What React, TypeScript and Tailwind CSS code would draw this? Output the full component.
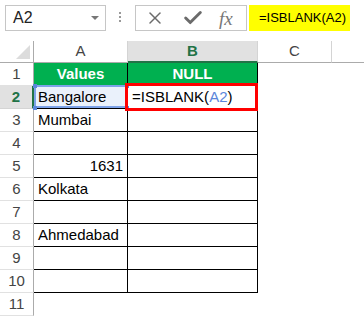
import {X, Check} from 'lucide-react';

const rows: {n: number; a: string; right?: boolean}[] = [
  {n: 3, a: 'Mumbai'},
  {n: 4, a: ''},
  {n: 5, a: '1631', right: true},
  {n: 6, a: 'Kolkata'},
  {n: 7, a: ''},
  {n: 8, a: 'Ahmedabad'},
  {n: 9, a: ''},
  {n: 10, a: ''}
];

function RowHead({n, active}: {n: number; active?: boolean}) {
  return (
    <div
      className={`flex items-center justify-center border-b ${
        active
          ? 'border-b-[#d4d4d4] border-r-2 border-r-[#217346] bg-[#e1e1e1] font-bold text-[#217346]'
          : 'border-b-[#e1e1e1] border-r border-r-[#ababab] text-[#444]'
      }`}
    >
      {n}
    </div>
  );
}

export default function App() {
  return (
    <div className="h-[316px] w-[364px] overflow-hidden bg-white text-[15px] font-['Liberation_Sans',Arial,sans-serif] text-black">
      {/* formula bar */}
      <div className="flex h-[41px] items-start pt-[5px]">
        <div className="ml-[5px] flex h-[26px] w-[101px] items-center justify-between border border-[#c6c6c6] pl-[7px] pr-[6px] text-[16px] text-[#222]">
          <span>A2</span>
          <span className="h-0 w-0 border-x-[4px] border-t-[4px] border-x-transparent border-t-[#777]" />
        </div>
        <div className="ml-[13px] mt-[7px] flex flex-col gap-[2px]">
          <span className="h-[2px] w-[2px] bg-[#999]" />
          <span className="h-[2px] w-[2px] bg-[#999]" />
          <span className="h-[2px] w-[2px] bg-[#999]" />
        </div>
        <div className="ml-[14px] flex h-[26px] w-[112px] items-center border border-[#c6c6c6] pl-[9px] text-[#6b6b6b]">
          <X size={20} strokeWidth={1.8} />
          <Check size={22} strokeWidth={3.2} className="ml-[17px]" />
          <span className="ml-[15px] font-['Liberation_Serif',serif] text-[19px] italic leading-none text-[#777]">fx</span>
        </div>
        <div className="ml-[2px] flex h-[26px] w-[101px] items-center bg-[#ffff00] pl-[10px] text-[13px]">=ISBLANK(A2)</div>
      </div>

      {/* grid */}
      <div className="grid grid-cols-[34px_94px_130px_74px_1fr] grid-rows-[22px_repeat(11,23px)]">
        {/* column headers */}
        <div className="relative border-b border-r border-[#ababab] bg-white">
          <span className="absolute bottom-[3px] right-[3px] h-0 w-0 border-b-[14px] border-l-[14px] border-b-[#dcdcdc] border-l-transparent" />
        </div>
        <div className="flex items-center justify-center border-b border-r border-b-[#ababab] border-r-[#d4d4d4] text-[#444]">A</div>
        <div className="flex items-center justify-center border-b-2 border-r border-b-[#217346] border-r-[#d4d4d4] bg-[#e1e1e1] font-bold text-[#217346]">B</div>
        <div className="flex items-center justify-center border-b border-r border-b-[#ababab] border-r-[#d4d4d4] text-[#444]">C</div>
        <div className="border-b border-[#ababab]" />

        {/* row 1 */}
        <RowHead n={1} />
        <div className="flex items-center justify-center border-b border-r border-black bg-[#00b050] font-bold text-white">Values</div>
        <div className="flex items-center justify-center border-b border-r border-black bg-[#00b050] font-bold text-white">NULL</div>
        <div />
        <div />

        {/* row 2 */}
        <RowHead n={2} active />
        <div className="relative flex items-center border-b border-r border-black bg-[#eaf1fb] pl-[4px]">
          <span className="absolute inset-[0px] -top-[1px] border-2 border-[#7da2e8]" />
          <span className="absolute -left-[1px] -top-[2px] h-[4px] w-[4px] bg-[#5b86db]" />
          <span className="absolute -right-[2px] -top-[2px] h-[4px] w-[4px] bg-[#5b86db]" />
          <span className="absolute -bottom-[2px] -left-[1px] h-[4px] w-[4px] bg-[#5b86db]" />
          <span className="absolute -bottom-[2px] -right-[2px] h-[4px] w-[4px] bg-[#5b86db]" />
          <span className="relative">Bangalore</span>
        </div>
        <div className="relative flex items-center border-b border-r border-black pl-[4px]">
          <span className="absolute -bottom-[3px] -left-[3px] -right-[1px] -top-[3px] border-[3px] border-[#ff0000]" />
          <span>
            =ISBLANK(<span className="text-[#5b86db]">A2</span>)
          </span>
        </div>
        <div />
        <div />

        {rows.map((r) => (
          <div key={r.n} className="contents">
            <RowHead n={r.n} />
            <div className={`flex items-center border-b border-r border-black ${r.right ? 'justify-end pr-[4px]' : 'pl-[4px]'}`}>{r.a}</div>
            <div className="border-b border-r border-black" />
            <div />
            <div />
          </div>
        ))}

        <RowHead n={11} />
      </div>
    </div>
  );
}
